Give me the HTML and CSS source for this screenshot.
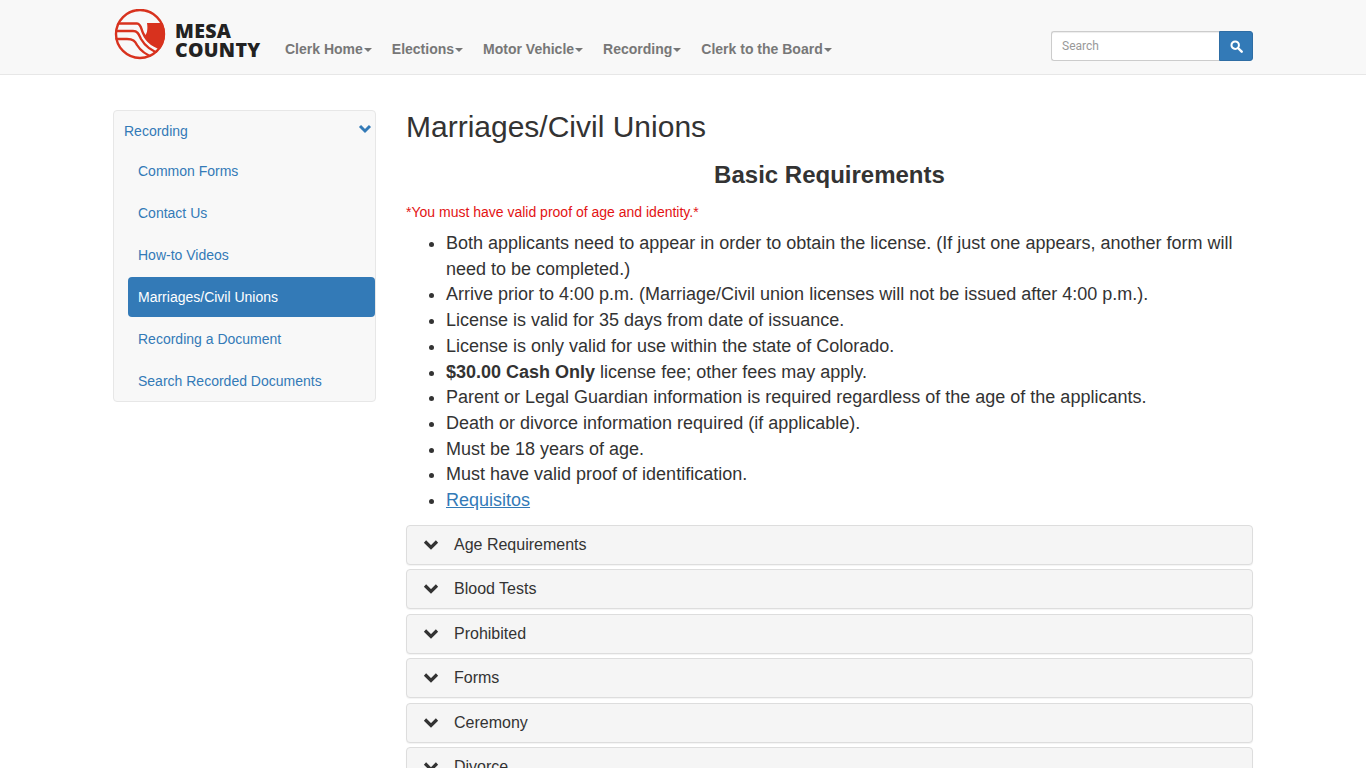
FILE: index.html
```html
<!DOCTYPE html>
<html lang="en">
<head>
<meta charset="utf-8">
<title>Marriages/Civil Unions</title>
<link rel="stylesheet" href="styles.css">
</head>
<body>
<header class="navbar">
  <div class="container nav-inner">
    <a class="brand" href="#">
      <svg class="logo" viewBox="0 0 56 52" width="56" height="52" aria-hidden="true">
        <defs><clipPath id="disc"><circle cx="27" cy="25" r="25"/></clipPath></defs>
        <g clip-path="url(#disc)">
          <path d="M34 14 H56 V40 L44 38 C38 36 34 32 31 27 C34 26 35 20 34 14 Z" fill="#d8321e"/>
          <path d="M0 14.5 H24 C28 14.5 28 20 30 24 C33 31 40 38 52 40.5" fill="none" stroke="#d8321e" stroke-width="2.4"/>
          <path d="M0 22 H20 C25 22 26 26 28 30 C32 37 38 42 48 45" fill="none" stroke="#d8321e" stroke-width="2.4"/>
          <path d="M0 30 H14 C20 30 22 32 24 36 C27 41 33 46 42 49" fill="none" stroke="#d8321e" stroke-width="2.4"/>
        </g>
        <circle cx="27" cy="25" r="24" fill="none" stroke="#d8321e" stroke-width="2.4"/>
      </svg>
      <span class="brand-text"><span>MESA</span><span>COUNTY</span></span>
    </a>
    <nav class="menu">
      <a href="#">Clerk Home<i class="caret"></i></a>
      <a href="#">Elections<i class="caret"></i></a>
      <a href="#">Motor Vehicle<i class="caret"></i></a>
      <a href="#">Recording<i class="caret"></i></a>
      <a href="#">Clerk to the Board<i class="caret"></i></a>
    </nav>
    <form class="search">
      <input type="text" placeholder="Search">
      <button type="button" aria-label="Search">
        <svg viewBox="0 0 14 14" width="13" height="13" aria-hidden="true"><circle cx="5.6" cy="5.6" r="4" fill="none" stroke="#fff" stroke-width="2.2"/><path d="M8.6 8.6 L12.6 12.6" stroke="#fff" stroke-width="2.6" stroke-linecap="round"/></svg>
      </button>
    </form>
  </div>
</header>
<div class="container page">
  <aside class="side">
    <div class="side-panel">
      <a class="side-head" href="#">Recording
        <svg class="side-chev" viewBox="0 0 14 10" width="14" height="10" aria-hidden="true"><path d="M2 2 L7 7 L12 2" fill="none" stroke="#337ab7" stroke-width="3"/></svg>
      </a>
      <a class="side-link" href="#">Common Forms</a>
      <a class="side-link" href="#">Contact Us</a>
      <a class="side-link" href="#">How-to Videos</a>
      <a class="side-link active" href="#">Marriages/Civil Unions</a>
      <a class="side-link" href="#">Recording a Document</a>
      <a class="side-link" href="#">Search Recorded Documents</a>
    </div>
  </aside>
  <main class="main">
    <h1>Marriages/Civil Unions</h1>
    <h2>Basic Requirements</h2>
    <p class="warn">*You must have valid proof of age and identity.*</p>
    <ul class="reqs">
      <li>Both applicants need to appear in order to obtain the license. (If just one appears, another form will need to be completed.)</li>
      <li>Arrive prior to 4:00 p.m. (Marriage/Civil union licenses will not be issued after 4:00 p.m.).</li>
      <li>License is valid for 35 days from date of issuance.</li>
      <li>License is only valid for use within the state of Colorado.</li>
      <li><strong>$30.00 Cash Only</strong> license fee; other fees may apply.</li>
      <li>Parent or Legal Guardian information is required regardless of the age of the applicants.</li>
      <li>Death or divorce information required (if applicable).</li>
      <li>Must be 18 years of age.</li>
      <li>Must have valid proof of identification.</li>
      <li><a href="#">Requisitos</a></li>
    </ul>
    <div class="acc"><svg viewBox="0 0 16 12" width="16" height="12" aria-hidden="true"><path d="M2 2.5 L8 8.5 L14 2.5" fill="none" stroke="#333" stroke-width="3.2"/></svg><span>Age Requirements</span></div>
    <div class="acc"><svg viewBox="0 0 16 12" width="16" height="12" aria-hidden="true"><path d="M2 2.5 L8 8.5 L14 2.5" fill="none" stroke="#333" stroke-width="3.2"/></svg><span>Blood Tests</span></div>
    <div class="acc"><svg viewBox="0 0 16 12" width="16" height="12" aria-hidden="true"><path d="M2 2.5 L8 8.5 L14 2.5" fill="none" stroke="#333" stroke-width="3.2"/></svg><span>Prohibited</span></div>
    <div class="acc"><svg viewBox="0 0 16 12" width="16" height="12" aria-hidden="true"><path d="M2 2.5 L8 8.5 L14 2.5" fill="none" stroke="#333" stroke-width="3.2"/></svg><span>Forms</span></div>
    <div class="acc"><svg viewBox="0 0 16 12" width="16" height="12" aria-hidden="true"><path d="M2 2.5 L8 8.5 L14 2.5" fill="none" stroke="#333" stroke-width="3.2"/></svg><span>Ceremony</span></div>
    <div class="acc"><svg viewBox="0 0 16 12" width="16" height="12" aria-hidden="true"><path d="M2 2.5 L8 8.5 L14 2.5" fill="none" stroke="#333" stroke-width="3.2"/></svg><span>Divorce</span></div>
  </main>
</div>
</body>
</html>
```
FILE: styles.css
```css
* { box-sizing: border-box; }
html, body { margin: 0; height: 768px; overflow: hidden; }
body { font-family: "Liberation Sans", Arial, sans-serif; font-size: 14px; line-height: 20px; color: #333; background: #fff; }
a { text-decoration: none; color: #337ab7; }
.container { width: 1170px; margin: 0 auto; padding: 0 15px; }
.navbar { height: 75px; background: #f8f8f8; border-bottom: 1px solid #e7e7e7; }
.nav-inner { display: flex; height: 74px; position: relative; }
.brand { display: flex; width: 172px; padding-top: 9px; }
.logo { flex: none; margin-right: 6px; }
.brand-text { display: flex; flex-direction: column; padding-top: 12px; font-family: "Open Sans", Arial, sans-serif; font-weight: 800; font-size: 19.5px; line-height: 19px; color: #222; letter-spacing: .3px; }
.menu { display: flex; gap: 20px; padding-top: 39px; }
.menu a { color: #777; font-weight: 700; font-size: 14px; line-height: 20px; white-space: nowrap; }
.caret { display: inline-block; margin-left: 1px; vertical-align: middle; border-top: 4px solid #777; border-left: 4px solid transparent; border-right: 4px solid transparent; }
.search { display: flex; margin-left: auto; padding-top: 31px; height: 61px; }
.search input { width: 168px; height: 30px; padding: 5px 10px; border: 1px solid #ccc; border-right: 0; border-radius: 3px 0 0 3px; background: #fff; font-family: "Roboto", "Liberation Sans", sans-serif; font-size: 12px; box-shadow: inset 0 1px 1px rgba(0,0,0,.075); outline: 0; }
.search input::placeholder { color: #999; }
.search button { width: 34px; height: 30px; padding: 0; display: flex; align-items: center; justify-content: center; background: #337ab7; border: 1px solid #2e6da4; border-radius: 0 3px 3px 0; }
.page { display: flex; gap: 30px; }
.side { width: 263px; flex: none; padding-top: 35px; }
.side-panel { height: 292px; background: #f8f8f8; border: 1px solid #e7e7e7; border-radius: 4px; padding: 0 0 0 14px; }
.side-head { display: block; position: relative; margin-left: -4px; padding-top: 10px; height: 40px; color: #337ab7; }
.side-chev { position: absolute; right: 3px; top: 13px; }
.side-link { display: block; height: 40px; margin-bottom: 2px; padding: 10px 10px; border-radius: 4px; color: #337ab7; }
.side-link.active { background: #337ab7; color: #fff; }
.main { flex: 1; min-width: 0; width: 847px; }
h1 { margin: 32px 0 0; font-weight: 400; font-size: 30px; line-height: 40px; color: #333; }
h2 { margin: 11px 0 0; text-align: center; font-size: 24px; line-height: 34px; font-weight: 700; color: #333; }
.warn { margin: 10px 0 0; color: #e31313; line-height: 20px; }
.reqs { margin: 9px 0 11px; padding-left: 40px; font-size: 18px; line-height: 25.71px; }
.reqs a { text-decoration: underline; }
.acc { display: flex; align-items: center; height: 40px; margin-bottom: 4.5px; padding-left: 16px; background: #f5f5f5; border: 1px solid #ddd; border-radius: 4px; box-shadow: 0 1px 1px rgba(0,0,0,.05); font-size: 16px; }
.acc span { margin-left: 15px; }
```
